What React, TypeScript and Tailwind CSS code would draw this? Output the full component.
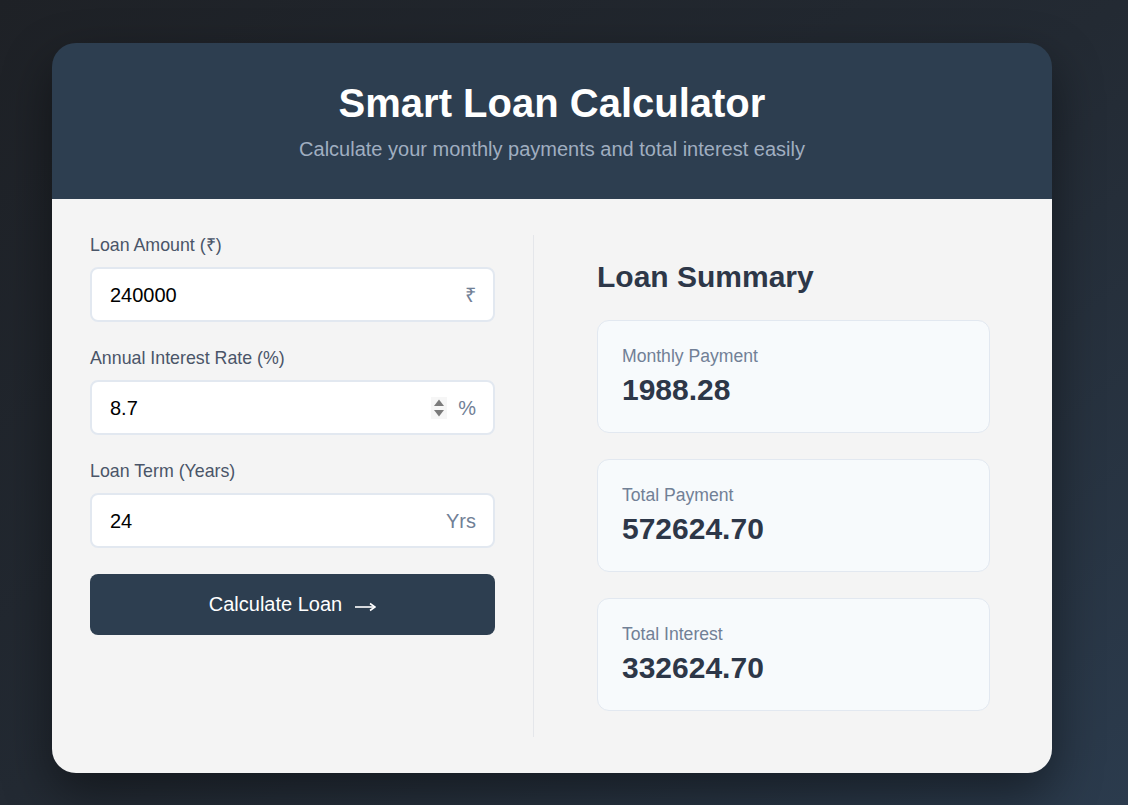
import React from 'react';

type Field = {
	label: string;
	value: string;
	suffix: string;
	spinner?: boolean;
};

const fields: Field[] = [
	{ label: 'Loan Amount (₹)', value: '240000', suffix: '₹' },
	{ label: 'Annual Interest Rate (%)', value: '8.7', suffix: '%', spinner: true },
	{ label: 'Loan Term (Years)', value: '24', suffix: 'Yrs' },
];

const summary = [
	{ label: 'Monthly Payment', value: '1988.28' },
	{ label: 'Total Payment', value: '572624.70' },
	{ label: 'Total Interest', value: '332624.70' },
];

function Spinner() {
	return (
		<div className="w-4 h-[22px] bg-[#f6f6f6] flex items-center justify-center">
			<svg width="12" height="20" viewBox="0 0 12 20">
				<path d="M6 1.5 L11 8 L1 8 Z" fill="#7b7b7b" />
				<path d="M6 18.5 L11 12 L1 12 Z" fill="#7b7b7b" />
			</svg>
		</div>
	);
}

export default function App() {
	return (
		<div className="min-h-screen bg-linear-to-br from-[#1e2126] via-[#232a33] to-[#2b3b4d] pt-[43px] pl-[52px] font-['Liberation_Sans',Arial,sans-serif]">
			<div className="w-[1000px] rounded-3xl overflow-hidden shadow-[0_20px_50px_rgba(0,0,0,0.45)]">
				{/* header */}
				<div className="bg-[#2d3e50] pt-[37px] pb-[38px] text-center">
					<h1 className="text-[40px] leading-[46px] font-bold text-white mb-3">Smart Loan Calculator</h1>
					<p className="text-[20px] leading-[23px] text-[#a0aec0]">
						Calculate your monthly payments and total interest easily
					</p>
				</div>

				{/* body */}
				<div className="bg-[#f4f4f4] flex px-[38px] py-[36px]">
					<div className="w-[405px] flex flex-col gap-[26px]">
						{fields.map((f) => (
							<div key={f.label}>
								<label className="block text-[17.8px] leading-[20px] text-[#4a5568] mb-3">
									{f.label}
								</label>
								<div className="h-[55px] bg-white border-2 border-[#e2e8f0] rounded-lg flex items-center pl-[18px] pr-[17px]">
									<input
										readOnly
										value={f.value}
										className="flex-1 min-w-0 bg-transparent outline-none text-[20px] text-black"
									/>
									{f.spinner && (
										<div className="mr-[11px]">
											<Spinner />
										</div>
									)}
									<span className="text-[20px] text-[#718096]">{f.suffix}</span>
								</div>
							</div>
						))}
						<button className="h-[61px] w-full rounded-lg bg-[#2d3e50] text-white text-[20px] leading-[23px] flex items-center justify-center">
							Calculate Loan
							<svg className="ml-[13px] mt-1" width="21" height="10" viewBox="0 0 21 10">
								<path d="M0 5 H19" stroke="white" strokeWidth="1.6" />
								<path d="M15 1.5 L20 5 L15 8.5" stroke="white" strokeWidth="1.6" fill="none" />
							</svg>
						</button>
					</div>

					<div className="ml-[38px] flex-1 border-l border-[#e4e6ea] pl-[63px] pr-6 pt-[25px] pb-[26px]">
						<h2 className="text-[30px] leading-[34px] font-bold text-[#2d3748] mb-[26px]">Loan Summary</h2>
						<div className="flex flex-col gap-[26px]">
							{summary.map((s) => (
								<div
									key={s.label}
									className="bg-[#f7fafc] border border-[#e2e8f0] rounded-xl px-6 py-[25px]"
								>
									<div className="text-[17.6px] leading-[20px] text-[#718096] mb-1.5">
										{s.label}
									</div>
									<div className="text-[30px] leading-[35px] font-bold text-[#2d3748]">{s.value}</div>
								</div>
							))}
						</div>
					</div>
				</div>
			</div>
		</div>
	);
}
